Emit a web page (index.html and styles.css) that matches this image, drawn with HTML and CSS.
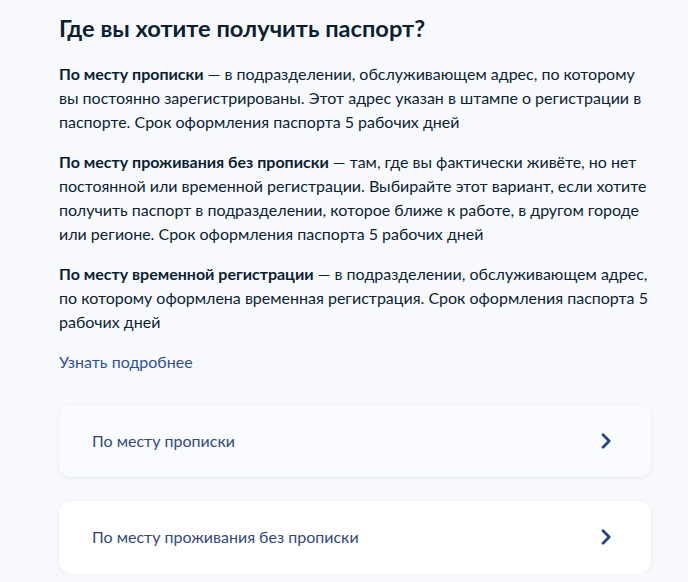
FILE: index.html
```html
<!DOCTYPE html>
<html lang="ru">
<head>
<meta charset="utf-8">
<link rel="stylesheet" href="styles.css">
</head>
<body>
<main class="page">
  <h1 class="title">Где вы хотите получить паспорт?</h1>
  <p class="text"><b>По месту прописки</b> — в подразделении, обслуживающем адрес, по которому вы постоянно зарегистрированы. Этот адрес указан в штампе о регистрации в паспорте. Срок оформления паспорта 5 рабочих дней</p>
  <p class="text"><b>По месту проживания без прописки</b> — там, где вы фактически живёте, но нет постоянной или временной регистрации. Выбирайте этот вариант, если хотите получить паспорт в подразделении, которое ближе к работе, в другом городе или регионе. Срок оформления паспорта 5 рабочих дней</p>
  <p class="text"><b>По месту временной регистрации</b> — в подразделении, обслуживающем адрес, по которому оформлена временная регистрация. Срок оформления паспорта 5 рабочих дней</p>
  <p class="text"><a class="link" href="#">Узнать подробнее</a></p>
  <div class="options">
    <a class="option option-hover" href="#">
      <span>По месту прописки</span>
      <svg class="chev" width="12" height="16" viewBox="0 0 12 16"><path d="M3 1.8 L9.2 8 L3 14.2" fill="none" stroke="#22408c" stroke-width="2.7" stroke-linecap="round" stroke-linejoin="round"/></svg>
    </a>
    <a class="option" href="#">
      <span>По месту проживания без прописки</span>
      <svg class="chev" width="12" height="16" viewBox="0 0 12 16"><path d="M3 1.8 L9.2 8 L3 14.2" fill="none" stroke="#22408c" stroke-width="2.7" stroke-linecap="round" stroke-linejoin="round"/></svg>
    </a>
  </div>
</main>
</body>
</html>
```
FILE: styles.css
```css
html, body {
  margin: 0;
  padding: 0;
  background: #f8f9fc;
}
body {
  font-family: Lato, "Noto Sans", sans-serif;
  color: #0b1f33;
  font-size: 16px;
  line-height: 24px;
}
.page {
  width: 592px;
  padding: 12px 0 0 59px;
}
.title {
  margin: 0 0 18px;
  font-size: 23.6px;
  line-height: 32px;
  font-weight: 700;
  color: #0b1f33;
}
.text {
  margin: 0 0 16px;
}
.text b {
  font-weight: 700;
}
.link {
  color: #2f5297;
  text-decoration: none;
}
.options {
  margin-top: 31px;
  display: flex;
  flex-direction: column;
  gap: 24px;
}
.option {
  height: 72px;
  box-sizing: border-box;
  display: flex;
  align-items: center;
  justify-content: space-between;
  padding: 0 39px 0 33px;
  background: #ffffff;
  border-radius: 12px;
  box-shadow: 0 1px 4px rgba(30, 60, 120, 0.08);
  color: #33497a;
  text-decoration: none;
}
.option-hover {
  background: #f9fbfe;
}
.chev {
  display: block;
}
```
